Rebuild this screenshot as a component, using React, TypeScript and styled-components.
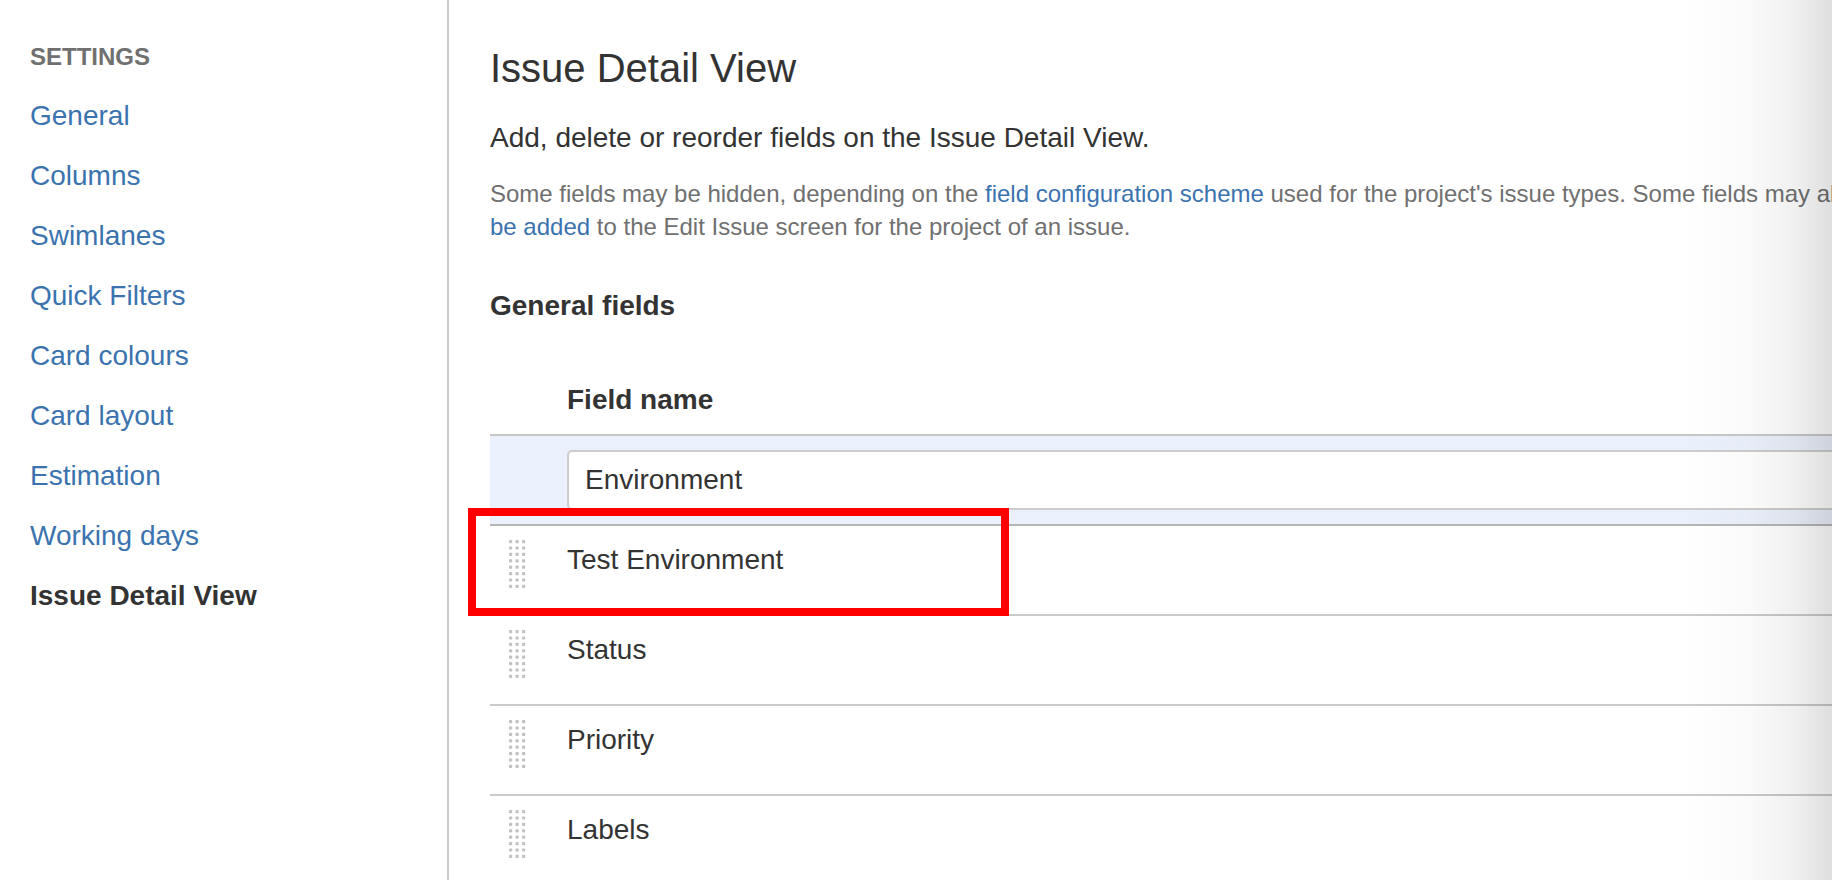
import React from 'react';
import styled, { createGlobalStyle } from 'styled-components';

const GlobalStyle = createGlobalStyle`
  *, *::before, *::after {
    box-sizing: border-box;
  }
  html, body {
    margin: 0;
    padding: 0;
    background: #fff;
  }
  body {
    width: 1832px;
    height: 880px;
    overflow: hidden;
    font-family: "Liberation Sans", Arial, Helvetica, sans-serif;
    color: #333;
  }
`;

const Page = styled.div`
  position: relative;
  display: flex;
  height: 880px;
  overflow: hidden;
`;

const Sidebar = styled.nav`
  flex: 0 0 449px;
  border-right: 2px solid #cccccc;
  padding: 42px 30px 0;
`;

const NavHeading = styled.h2`
  margin: 0 0 14px;
  font-size: 24px;
  line-height: 30px;
  font-weight: bold;
  text-transform: uppercase;
  color: #707070;
`;

const NavList = styled.ul`
  list-style: none;
  margin: 0;
  padding: 0;
`;

const NavLink = styled.a<{ $active?: boolean }>`
  display: block;
  font-size: 28px;
  line-height: 60px;
  white-space: nowrap;
  text-decoration: none;
  color: ${(p) => (p.$active ? '#333333' : '#3b73af')};
  font-weight: ${(p) => (p.$active ? 'bold' : 'normal')};
`;

const Main = styled.main`
  flex: 0 0 auto;
  padding: 44px 0 0 41px;
`;

const Content = styled.div`
  width: 1470px;
`;

const Title = styled.h1`
  margin: 0;
  font-size: 40px;
  line-height: 48px;
  font-weight: normal;
  color: #333;
`;

const Lead = styled.p`
  margin: 26px 0 0;
  font-size: 28px;
  line-height: 40px;
  color: #333;
`;

const Description = styled.p`
  margin: 19px 0 0;
  font-size: 24px;
  line-height: 33px;
  color: #707070;
`;

const Link = styled.a`
  color: #3b73af;
  text-decoration: none;
`;

const SectionTitle = styled.h3`
  margin: 43px 0 0;
  font-size: 28px;
  line-height: 40px;
  font-weight: bold;
  color: #333;
`;

const Table = styled.div`
  margin-top: 20px;
`;

const Row = styled.div<{ $variant?: 'head' | 'edit' | 'item' }>`
  position: relative;
  display: grid;
  grid-template-columns: 77px 1fr;
  align-items: ${(p) => (p.$variant === 'edit' ? 'center' : 'start')};
  font-size: 28px;
  line-height: 40px;
  ${(p) =>
    p.$variant === 'head'
      ? `
    padding: 34px 0 14px;
    font-weight: bold;
    border-bottom: 2px solid #c8c8c8;
  `
      : p.$variant === 'edit'
      ? `
    padding: 14px 0;
    background: #ebf1fc;
    border-bottom: 2px solid #b5b5b5;
  `
      : `
    height: 90px;
    padding-top: 14px;
    border-bottom: 2px solid #cacaca;
  `}
`;

const GripCell = styled.div`
  padding-left: 19px;
  line-height: 0;
`;

const FieldInput = styled.input`
  display: block;
  width: 100%;
  height: 60px;
  padding: 0 16px;
  border: 2px solid #cccccc;
  border-radius: 5px;
  background: #fff;
  font-family: inherit;
  font-size: 28px;
  color: #333;
  outline: none;
`;

const Highlight = styled.div`
  position: absolute;
  left: -22px;
  top: -18px;
  width: 541px;
  height: 108px;
  border: 8px solid #ff0000;
  pointer-events: none;
`;

const EdgeShade = styled.div`
  position: absolute;
  top: 0;
  right: 0;
  bottom: 0;
  width: 150px;
  pointer-events: none;
  background: linear-gradient(
    to right,
    rgba(0, 0, 0, 0) 0%,
    rgba(0, 0, 0, 0.02) 45%,
    rgba(0, 0, 0, 0.06) 75%,
    rgba(0, 0, 0, 0.13) 100%
  );
`;

// drag handle: 3 columns x 8 rows of small grey dots
const Grip = () => {
  const dots = [];
  for (let r = 0; r < 8; r++) {
    for (let c = 0; c < 3; c++) {
      dots.push(
        <rect key={`${r}-${c}`} x={c * 6.5} y={r * 6.4} width={3.2} height={3.2} rx={0.8} fill="#c2c2c2" />
      );
    }
  }
  return (
    <svg width="17" height="48" viewBox="0 0 17 48" aria-hidden="true">
      {dots}
    </svg>
  );
};

const navItems = [
  'General',
  'Columns',
  'Swimlanes',
  'Quick Filters',
  'Card colours',
  'Card layout',
  'Estimation',
  'Working days',
  'Issue Detail View',
];

const fields = ['Test Environment', 'Status', 'Priority', 'Labels'];

const App = () => {
  return (
    <>
      <GlobalStyle />
      <Page>
        <Sidebar>
          <NavHeading>Settings</NavHeading>
          <NavList>
            {navItems.map((item) => (
              <li key={item}>
                <NavLink href="#" $active={item === 'Issue Detail View'}>
                  {item}
                </NavLink>
              </li>
            ))}
          </NavList>
        </Sidebar>
        <Main>
          <Content>
            <Title>Issue Detail View</Title>
            <Lead>Add, delete or reorder fields on the Issue Detail View.</Lead>
            <Description>
              Some fields may be hidden, depending on the{' '}
              <Link href="#">field configuration scheme</Link> used for the project's issue types.
              Some fields may also <Link href="#">need to be added</Link> to the Edit Issue screen
              for the project of an issue.
            </Description>
            <SectionTitle>General fields</SectionTitle>
            <Table>
              <Row $variant="head">
                <div />
                <div>Field name</div>
              </Row>
              <Row $variant="edit">
                <div />
                <FieldInput value="Environment" readOnly />
              </Row>
              {fields.map((name, i) => (
                <Row key={name} $variant="item">
                  <GripCell>
                    <Grip />
                  </GripCell>
                  <div>{name}</div>
                  {i === 0 && <Highlight />}
                </Row>
              ))}
            </Table>
          </Content>
        </Main>
        <EdgeShade />
      </Page>
    </>
  );
};

export default App;
